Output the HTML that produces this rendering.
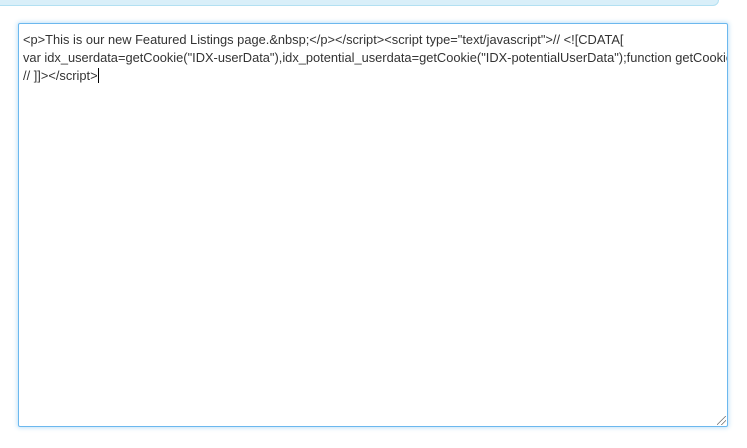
<!DOCTYPE html>
<html><head><style>
body{margin:0;width:747px;height:448px;background:#fff;position:relative;overflow:hidden;font-family:"Liberation Sans",Helvetica,Arial,sans-serif}
.band{position:absolute;left:-10px;top:-10px;width:727px;height:14px;background:#d9eff9;border:1px solid #b2e0f2;border-radius:6px}
.ta{position:absolute;left:18px;top:23px;width:708px;height:402px;border:1px solid #6cb8ee;border-radius:2px;box-shadow:0 0 4px 1px rgba(120,190,240,.45);overflow:hidden}
.t{position:absolute;left:4px;top:7px;font-size:12.85px;line-height:18px;color:#333;white-space:pre}
.cur{display:inline-block;width:1px;height:15px;background:#000;vertical-align:-3px}
.rz{position:absolute;right:1px;bottom:1px;width:9px;height:9px;background:linear-gradient(135deg,transparent 45%,#777 46%,#777 52%,transparent 53%,transparent 70%,#777 71%,#777 77%,transparent 78%)}
</style></head><body>
<div class="band"></div>
<div class="ta"><div class="t">&lt;p&gt;This is our new Featured Listings page.&amp;nbsp;&lt;/p&gt;&lt;/script&gt;&lt;script type="text/javascript"&gt;// &lt;![CDATA[
var idx_userdata=getCookie("IDX-userData"),idx_potential_userdata=getCookie("IDX-potentialUserData");function getCookie
// ]]&gt;&lt;/script&gt;<span class="cur"></span></div><div class="rz"></div></div>
</body></html>
